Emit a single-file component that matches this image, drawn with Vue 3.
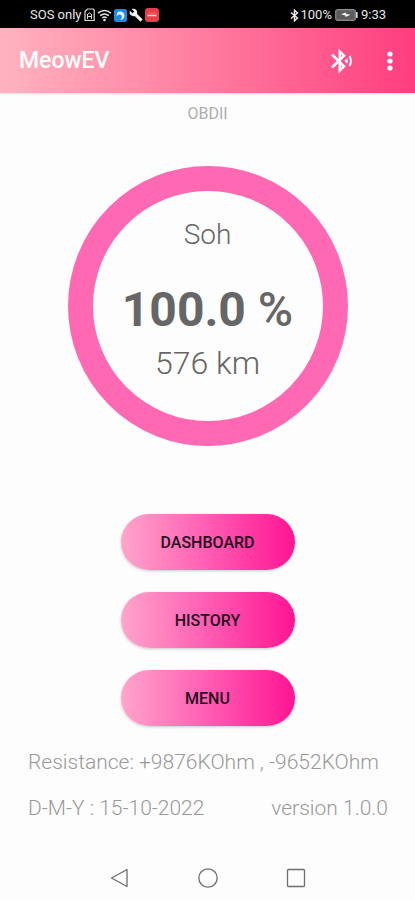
<script setup>
const actions = ['DASHBOARD', 'HISTORY', 'MENU']
const soh = { label: 'Soh', value: '100.0', unit: '%', range: '576 km' }
</script>

<template>
  <div class="screen">
    <div class="status">
      <div class="status-group">
        <span>SOS only</span>
        <svg class="sim" width="11" height="14" viewBox="0 0 11 14" aria-hidden="true">
          <path d="M3.5 1h5.7l1 1v10.5H1V3.5z" fill="none" stroke="#ddd" stroke-width="1.2" />
          <path d="M3.5 6v5M7.500 6v5M3.500 6.500l2-1.500 2 1.500M3.500 8.500h4" fill="none" stroke="#ddd" stroke-width="1" />
        </svg>
        <svg width="15" height="13" viewBox="0 0 15 13" aria-hidden="true">
          <path d="M1 4.2Q7.5-1 14 4.2M3.2 6.7q4.300-3.500 8.600 0M5.300 9q2.200-1.800 4.400 0" fill="none" stroke="#e4e4e4" stroke-width="1.500" />
          <circle cx="7.500" cy="11" r="1.300" fill="#e4e4e4" />
        </svg>
        <svg width="13" height="13" viewBox="0 0 13 13" aria-hidden="true">
          <rect width="13" height="13" rx="2.500" fill="#2389df" />
          <path d="M2.300 7.200L3.500 3.200C6 1.500 10.300 2.800 10.500 6.500 10.500 9.500 8.500 11 5.800 10.800 8 9.800 8.300 8 7.300 6.200 6 5 4.300 5.500 2.300 7.200z" fill="#e8f5ff" />
        </svg>
        <svg width="14" height="14" viewBox="0 0 24 24" aria-hidden="true">
          <path d="M22.700 19l-9.100-9.100c.9-2.300.4-5-1.500-6.900-2-2-5-2.400-7.400-1.300L9 6 6 9 1.600 4.700C.4 7.100.9 10.100 2.900 12.100c1.900 1.900 4.600 2.400 6.900 1.500l9.100 9.100c.4.4 1 .4 1.400 0l2.300-2.300c.5-.4.5-1.100.1-1.400z" fill="#f2f2f2" />
        </svg>
        <svg width="14" height="14" viewBox="0 0 14 14" aria-hidden="true">
          <rect width="14" height="14" rx="3" fill="#e93d48" />
          <path d="M2.500 7.500h9" stroke="#ffd3d4" stroke-width="1.500" />
          <path d="M3 5h8" stroke="#f06a70" />
        </svg>
      </div>
      <div class="status-group status-right">
        <svg width="9" height="13" viewBox="0 0 9 13" aria-hidden="true">
          <path d="M1 3.500l6.500 5.500-3 2.800V1.200l3 2.800L1 9.500" fill="none" stroke="#eee" stroke-width="1.400" />
        </svg>
        <span>100%</span>
        <svg class="battery" width="23" height="12" viewBox="0 0 23 12" aria-hidden="true">
          <rect x=".7" y=".7" width="19.600" height="10.600" rx="2" fill="#5c5c5c" stroke="#8a8a8a" stroke-width="1.200" />
          <path d="M21.800 3v6" stroke="#ddd" stroke-width="1.600" />
          <path d="M6 5.300l5-1.800v1.500l4.500.7-5 2.300V6.500z" fill="#fff" />
        </svg>
        <span>9:33</span>
      </div>
    </div>

    <header class="bar">
      <h1>MeowEV</h1>
      <div class="bar-actions">
        <button class="icon-button" type="button" aria-label="Bluetooth">
          <svg width="24" height="26" viewBox="0 0 24 26" aria-hidden="true">
            <path d="M2 6.500L14 18.300 9.800 22.500V3.500L14 7.700 2 19.500" fill="none" stroke="#fff" stroke-width="2.500" />
            <path d="M19.500 8q2.800 5 0 10" fill="none" stroke="#fff" stroke-width="2" />
            <path d="M14.800 13l2.200-2.200q1 2.200 0 4.400z" fill="#fff" stroke="#fff" stroke-width=".6" />
          </svg>
        </button>
        <button class="icon-button" type="button" aria-label="More options">
          <svg width="24" height="24" viewBox="0 0 24 24" aria-hidden="true">
            <g fill="#fff">
              <circle cx="12" cy="5" r="2.600" />
              <circle cx="12" cy="12" r="2.600" />
              <circle cx="12" cy="19" r="2.600" />
            </g>
          </svg>
        </button>
      </div>
    </header>

    <main class="content">
      <p class="device">OBDII</p>
      <section class="gauge">
        <p class="gauge-label">{{ soh.label }}</p>
        <p class="gauge-value">{{ soh.value }} <span class="gauge-unit">{{ soh.unit }}</span></p>
        <p class="gauge-range">{{ soh.range }}</p>
      </section>
      <div class="actions">
        <button v-for="name in actions" :key="name" class="pill" type="button">{{ name }}</button>
      </div>
      <div class="info">
        <p>Resistance: +9876KOhm , -9652KOhm</p>
        <div class="info-row">
          <span>D-M-Y : 15-10-2022</span>
          <span>version 1.0.0</span>
        </div>
      </div>
    </main>

    <nav class="system-nav">
      <button type="button" aria-label="Back">
        <svg width="24" height="24" viewBox="0 0 24 24" aria-hidden="true">
          <path d="M19 3.500v17L3.500 12z" />
        </svg>
      </button>
      <button type="button" aria-label="Home">
        <svg width="24" height="24" viewBox="0 0 24 24" aria-hidden="true">
          <circle cx="12" cy="12" r="9.200" />
        </svg>
      </button>
      <button type="button" aria-label="Recent apps">
        <svg width="24" height="24" viewBox="0 0 24 24" aria-hidden="true">
          <rect x="3.500" y="3.500" width="17" height="17" rx="1" />
        </svg>
      </button>
    </nav>
  </div>
</template>

<style>
body {
  margin: 0;
  background: #fdfdfd;
}
</style>

<style scoped>
.screen {
  display: flex;
  flex-direction: column;
  min-height: 100vh;
  background: #fdfdfd;
  font-family: Roboto, sans-serif;
}

p,
h1 {
  margin: 0;
}

button {
  border: 0;
  padding: 0;
  background: none;
  font-family: inherit;
  cursor: pointer;
}

svg {
  display: block;
  flex: none;
}

.status {
  display: flex;
  justify-content: space-between;
  align-items: center;
  box-sizing: border-box;
  height: 28px;
  padding: 2px 29px 0 30px;
  background: #000;
  color: #e6e6e6;
  font-size: 13px;
  line-height: 16px;
}

.status-group {
  display: flex;
  align-items: center;
  gap: 2px;
}

.status-right {
  gap: 1px;
}

.battery {
  margin: 0 2px;
}

.bar {
  display: flex;
  justify-content: space-between;
  align-items: center;
  height: 65px;
  padding: 0 13px 0 19px;
  background: linear-gradient(90deg, #ffb3bf, #ff7b9f 50%, #ff3d7f);
  box-shadow: 0 1px 2px rgba(0, 0, 0, 0.12);
  color: #fff;
}

.bar h1 {
  font-size: 23px;
  line-height: 30px;
  font-weight: 500;
}

.bar-actions {
  display: flex;
  align-items: center;
  gap: 24px;
}

.content {
  display: flex;
  flex: 1;
  flex-direction: column;
  align-items: center;
}

.device {
  margin-top: 11px;
  color: #adadad;
  font-size: 16px;
  line-height: 20px;
}

.gauge {
  display: flex;
  flex-direction: column;
  align-items: center;
  box-sizing: border-box;
  width: 280px;
  height: 280px;
  margin-top: 42px;
  padding-top: 26px;
  border: 25px solid #ff69b4;
  border-radius: 50%;
  color: #666;
}

.gauge-label {
  font-size: 28px;
  font-weight: 350;
  line-height: 36px;
}

.gauge-value {
  margin-top: 29px;
  font-size: 48px;
  line-height: 56px;
  font-weight: 700;
}

.gauge-unit {
  font-weight: 500;
}

.gauge-range {
  font-size: 32px;
  font-weight: 350;
  line-height: 50px;
}

.actions {
  display: flex;
  flex-direction: column;
  gap: 22px;
  margin-top: 68px;
}

.pill {
  width: 174px;
  height: 56px;
  border-radius: 28px;
  background: linear-gradient(90deg, #ffa5cb, #ff5cb2 50%, #ff1493);
  box-shadow: 0 1px 3px rgba(0, 0, 0, 0.22);
  color: #25091c;
  font-size: 16px;
  font-weight: 500;
}

.info {
  align-self: stretch;
  margin-top: 22px;
  padding: 0 27px 0 28px;
  color: #999;
  font-size: 21px;
  font-weight: 350;
  line-height: 28px;
}

.info-row {
  display: flex;
  justify-content: space-between;
  margin-top: 18px;
}

.system-nav {
  display: flex;
  justify-content: center;
  gap: 64px;
  padding: 10px 0;
}

.system-nav svg {
  fill: none;
  stroke: #6e6e6e;
  stroke-width: 1.3;
  stroke-linejoin: round;
}
</style>
